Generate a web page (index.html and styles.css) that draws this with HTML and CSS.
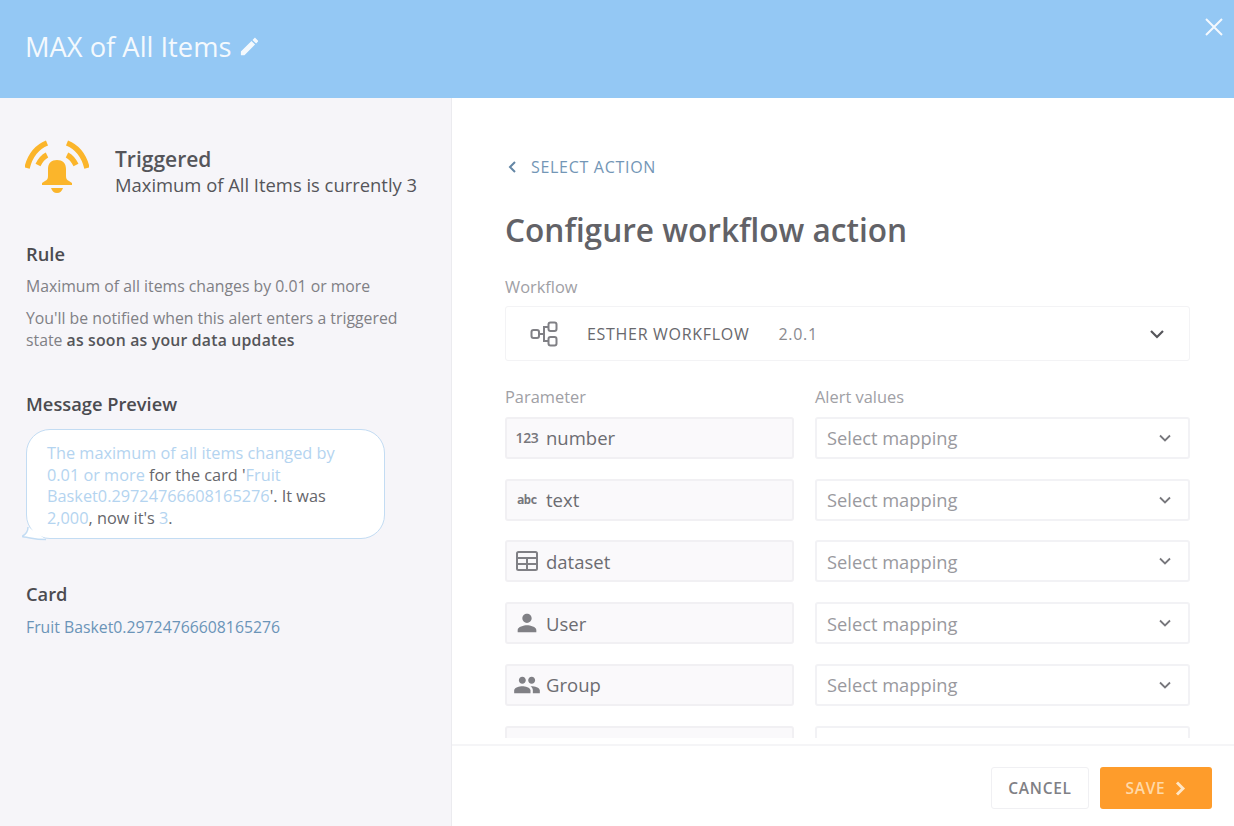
FILE: index.html
```html
<!DOCTYPE html>
<html lang="en">
<head>
    <meta charset="UTF-8">
    <title>MAX of All Items</title>
    <link rel="stylesheet" href="styles.css">
</head>
<body>
    <header class="top-bar">
        <h1 class="alert-title">MAX of All Items</h1>
        <svg class="edit-icon" viewBox="0 0 24 24"><path d="M3 17.25V21h3.75L17.81 9.94l-3.75-3.75L3 17.25zM20.71 7.04c.39-.39.39-1.02 0-1.41l-2.34-2.34c-.39-.39-1.02-.39-1.41 0l-1.83 1.83 3.75 3.75 1.83-1.83z"/></svg>
        <svg class="close-icon" viewBox="0 0 20 20"><path d="M2 2l16 16M18 2L2 18"/></svg>
    </header>

    <div class="main">
        <aside class="side">
            <div class="status">
                <svg class="bell" viewBox="0 0 64 54">
                    <path class="arc" d="M2 28C5 16 12 7 22 3"/>
                    <path class="arc" d="M62 28C59 16 52 7 42 3"/>
                    <path class="arc" d="M13 25C15 21 18 17 22 15"/>
                    <path class="arc" d="M51 25C49 21 46 17 42 15"/>
                    <path d="M32 20c-5.500 0-9 3-9 9v7c0 3-1 4-3 5l-3 2v2h30v-2l-3-2c-2-1-3-2-3-5v-7c0-6-3.500-9-9-9z"/>
                    <path d="M26 48h12c-1 3-3 5-6 5s-5-2-6-5z"/>
                </svg>
                <div class="status-body">
                    <div class="status-name">Triggered</div>
                    <div class="status-text">Maximum of All Items is currently 3</div>
                </div>
            </div>

            <section class="rule">
                <h2>Rule</h2>
                <p>Maximum of all items changes by 0.01 or more</p>
                <p>You'll be notified when this alert enters a triggered state <b>as soon as your data updates</b></p>
            </section>

            <section class="preview">
                <h2>Message Preview</h2>
                <div class="bubble">
                    <span class="token">The maximum of all items changed by 0.01 or more</span> for the card '<span class="token">Fruit Basket0.29724766608165276</span>'. It was <span class="token">2,000</span>, now it's <span class="token">3</span>.
                    <svg class="bubble-tail" viewBox="0 0 24 14"><path d="M6 0C6 4 4 7 .7 9C0 9.500 .5 10 2 10C8 10.500 12 12.500 24 12.500"/></svg>
                </div>
            </section>

            <section class="card">
                <h2>Card</h2>
                <a class="card-link">Fruit Basket0.29724766608165276</a>
            </section>
        </aside>

        <div class="content">
            <div class="form-area">
                <div class="back">
                    <svg class="back-icon" viewBox="0 0 10 14"><path d="M8 2L3 7l5 5"/></svg>
                    <span>SELECT ACTION</span>
                </div>
                <h2 class="form-title">Configure workflow action</h2>

                <div class="field-label">Workflow</div>
                <div class="workflow">
                    <svg class="workflow-icon" viewBox="0 0 28 26">
                        <rect x="1.500" y="9" width="7.500" height="8" rx="2"/>
                        <rect x="18.500" y="1.500" width="8" height="8.500" rx="2"/>
                        <rect x="18.500" y="16" width="8" height="8.500" rx="2"/>
                        <path d="M9 13H14M18.500 6H14V20h4.500"/>
                    </svg>
                    <span class="workflow-name">ESTHER WORKFLOW</span>
                    <span class="workflow-version">2.0.1</span>
                    <svg class="chevron big" viewBox="0 0 16 10"><path d="M2 2l6 6 6-6"/></svg>
                </div>

                <div class="params">
                    <div class="field-label">Parameter</div>
                    <div class="field-label">Alert values</div>

                    <div class="param"><span class="type-num">123</span>number</div>
                    <div class="mapping">Select mapping<svg class="chevron" viewBox="0 0 16 10"><path d="M3 2.500l5 5 5-5"/></svg></div>

                    <div class="param"><span class="type-abc">abc</span>text</div>
                    <div class="mapping">Select mapping<svg class="chevron" viewBox="0 0 16 10"><path d="M3 2.500l5 5 5-5"/></svg></div>

                    <div class="param">
                        <svg class="type-icon table-icon" viewBox="0 0 24 24"><rect x="2" y="3" width="20" height="18" rx="1.500"/><path d="M2 9h20M2 15h20M12 9v12"/></svg>dataset
                    </div>
                    <div class="mapping">Select mapping<svg class="chevron" viewBox="0 0 16 10"><path d="M3 2.500l5 5 5-5"/></svg></div>

                    <div class="param">
                        <svg class="type-icon wide-icon" viewBox="0 0 24 24"><path d="M12 12c2.210 0 4-1.790 4-4s-1.790-4-4-4-4 1.790-4 4 1.790 4 4 4zm0 2c-2.670 0-8 1.340-8 4v2h16v-2c0-2.660-5.330-4-8-4z"/></svg>User
                    </div>
                    <div class="mapping">Select mapping<svg class="chevron" viewBox="0 0 16 10"><path d="M3 2.500l5 5 5-5"/></svg></div>

                    <div class="param">
                        <svg class="type-icon wide-icon" viewBox="0 0 24 24"><path d="M16 11c1.660 0 2.990-1.340 2.990-3S17.660 5 16 5c-1.660 0-3 1.340-3 3s1.340 3 3 3zm-8 0c1.660 0 2.990-1.340 2.990-3S9.660 5 8 5C6.340 5 5 6.340 5 8s1.340 3 3 3zm0 2c-2.330 0-7 1.170-7 3.500V19h14v-2.500c0-2.330-4.670-3.500-7-3.500zm8 0c-.290 0-.620.020-.970.050 1.160.840 1.970 1.970 1.970 3.450V19h6v-2.500c0-2.330-4.670-3.500-7-3.500z"/></svg>Group
                    </div>
                    <div class="mapping">Select mapping<svg class="chevron" viewBox="0 0 16 10"><path d="M3 2.500l5 5 5-5"/></svg></div>

                    <div class="param"></div>
                    <div class="mapping"></div>
                </div>
            </div>

            <footer class="actions">
                <button class="btn-cancel">CANCEL</button>
                <button class="btn-save">SAVE<svg viewBox="0 0 10 14"><path d="M2.500 2l5 5-5 5"/></svg></button>
            </footer>
        </div>
    </div>
</body>
</html>
```
FILE: styles.css
```css
* {
    box-sizing: border-box;
}

html, body {
    height: 100%;
}

body {
    margin: 0;
    display: flex;
    flex-direction: column;
    overflow: hidden;
    font-family: "Open Sans", sans-serif;
    color: #55555a;
    background: #fff;
}

/* Top bar */
.top-bar {
    position: relative;
    flex: 0 0 98px;
    display: flex;
    align-items: center;
    gap: 7px;
    padding: 0 0 6px 25px;
    background: #94c8f4;
}

.alert-title {
    margin: 0;
    font-size: 27.300px;
    font-weight: 500;
    color: #fff;
    opacity: .9;
}

.edit-icon {
    width: 23px;
    height: 23px;
    fill: #fff;
    opacity: .9;
}

.close-icon {
    position: absolute;
    top: 17px;
    right: 10px;
    width: 20px;
    height: 20px;
    fill: none;
    stroke: #fff;
    stroke-width: 2;
    opacity: .9;
}

.main {
    flex: 1;
    display: flex;
    min-height: 0;
}

/* Left column */
.side {
    flex: 0 0 452px;
    padding: 42px 26px 0;
    background: #f6f5f9;
    border-right: 1px solid #ebebef;
}

.status {
    display: flex;
    gap: 26px;
    margin-left: -1px;
}

.bell {
    flex: none;
    width: 64px;
    height: 54px;
    fill: #fbb52b;
}

.bell .arc {
    fill: none;
    stroke: #fbb52b;
    stroke-width: 5.500;
}

.status-body {
    padding-top: 6px;
    white-space: nowrap;
}

.status-name {
    font-size: 21px;
    font-weight: 600;
    line-height: 26px;
    color: #55555a;
}

.status-text {
    font-size: 18.400px;
    line-height: 26px;
}

.side h2 {
    margin: 0;
    font-size: 18.300px;
    font-weight: 600;
    line-height: 24px;
    color: #4b4b50;
}

.rule {
    margin-top: 44px;
}

.rule p {
    margin: 9px 0 0;
    font-size: 15.800px;
    line-height: 22px;
    color: #808085;
}

.rule p + p {
    margin-top: 10px;
}

.rule b {
    font-weight: 600;
    letter-spacing: .2px;
    color: #55555a;
}

.preview {
    margin-top: 41px;
}

.bubble {
    position: relative;
    width: 359px;
    height: 110px;
    margin-top: 13px;
    padding: 13px 24px 0 20px;
    font-size: 16.300px;
    line-height: 21.600px;
    color: #66666b;
    background: #fff;
    border: 1.500px solid #c3dcf3;
    border-radius: 24px;
}

.token {
    color: #b4d4f0;
}

.bubble-tail {
    position: absolute;
    left: -5.500px;
    bottom: -2.500px;
    width: 24px;
    height: 14px;
    fill: #fff;
    stroke: #c3dcf3;
    stroke-width: 1.500;
}

.card {
    margin-top: 43px;
}

.card-link {
    display: block;
    margin-top: 10px;
    font-size: 15.800px;
    color: #6b94b8;
}

/* Right column */
.content {
    flex: 1;
    min-width: 0;
    display: flex;
    flex-direction: column;
}

.form-area {
    height: 640px;
    overflow: hidden;
    padding: 57px 44px 0 53px;
}

.back {
    display: flex;
    align-items: center;
    gap: 14px;
    height: 24px;
    padding-left: 2px;
    font-size: 16px;
    font-weight: 500;
    letter-spacing: .7px;
    color: #7396b6;
}

.back-icon {
    width: 10px;
    height: 14px;
    fill: none;
    stroke: #6486a5;
    stroke-width: 2;
}

.form-title {
    margin: 29px 0 0;
    font-size: 31.600px;
    font-weight: 600;
    line-height: 44px;
    color: #626267;
}

.field-label {
    font-size: 16.400px;
    line-height: 20px;
    color: #a0a0a5;
}

.form-title + .field-label {
    margin-top: 25px;
}

.workflow {
    display: flex;
    align-items: center;
    height: 55px;
    margin-top: 9px;
    padding: 0 24px;
    background: #fff;
    border: 1px solid #f3f3f5;
    border-radius: 3px;
}

.workflow-icon {
    width: 28px;
    height: 26px;
    fill: none;
    stroke: #808085;
    stroke-width: 2;
}

.workflow-name {
    margin-left: 29px;
    font-size: 16px;
    font-weight: 500;
    letter-spacing: .7px;
    color: #68686d;
}

.workflow-version {
    margin-left: 29px;
    font-size: 16px;
    letter-spacing: .7px;
    color: #8a8a8f;
}

.chevron {
    flex: none;
    width: 16px;
    height: 10px;
    margin-left: auto;
    fill: none;
    stroke: #77777c;
    stroke-width: 1.800;
}

.chevron.big {
    stroke: #55555a;
    stroke-width: 2.200;
}

.params {
    display: grid;
    grid-template-columns: 289px 375px;
    column-gap: 21px;
    row-gap: 19.750px;
    margin-top: 26px;
}

.params .field-label {
    margin-bottom: -10px;
}

.param,
.mapping {
    display: flex;
    align-items: center;
    height: 42px;
    border-radius: 3px;
}

.param {
    padding-left: 8px;
    font-size: 18.500px;
    background: #faf9fb;
    border: 2px solid #f1f0f3;
    color: #6c6c71;
}

.mapping {
    padding: 0 15px 0 10px;
    font-size: 18.300px;
    background: #fff;
    border: 2px solid #f2f2f5;
    color: #99999e;
}

.type-num,
.type-abc,
.type-icon {
    flex: none;
    width: 24px;
    margin-right: 7px;
}

.type-num {
    font-size: 14px;
    font-weight: 600;
    letter-spacing: -.3px;
    text-align: center;
    color: #77777c;
}

.type-abc {
    font-family: "DejaVu Sans Mono", monospace;
    font-size: 12px;
    font-weight: 700;
    letter-spacing: -.6px;
    text-align: center;
    color: #77777c;
}

.type-icon {
    height: 24px;
    fill: #808085;
}

.table-icon {
    fill: none;
    stroke: #808085;
    stroke-width: 2;
}

.wide-icon {
    width: 28px;
    height: 28px;
    margin: 0 5px 0 -2px;
}

/* Footer */
.actions {
    flex: 1;
    display: flex;
    justify-content: flex-end;
    gap: 11px;
    margin-top: 6px;
    padding: 21px 22px 0 0;
    border-top: 2px solid #f5f5f7;
}

.actions button {
    height: 42px;
    font-family: inherit;
    font-size: 15.500px;
    font-weight: 600;
    letter-spacing: .7px;
    border-radius: 3px;
}

.btn-cancel {
    width: 98px;
    color: #808085;
    background: #fff;
    border: 1px solid #f0f0f3;
}

.btn-save {
    width: 112px;
    display: flex;
    align-items: center;
    justify-content: center;
    gap: 9px;
    color: #ffd9a8;
    background: #fe9c2b;
    border: none;
}

.btn-save svg {
    width: 12px;
    height: 17px;
    fill: none;
    stroke: #ffe6c6;
    stroke-width: 2.400;
}
```
